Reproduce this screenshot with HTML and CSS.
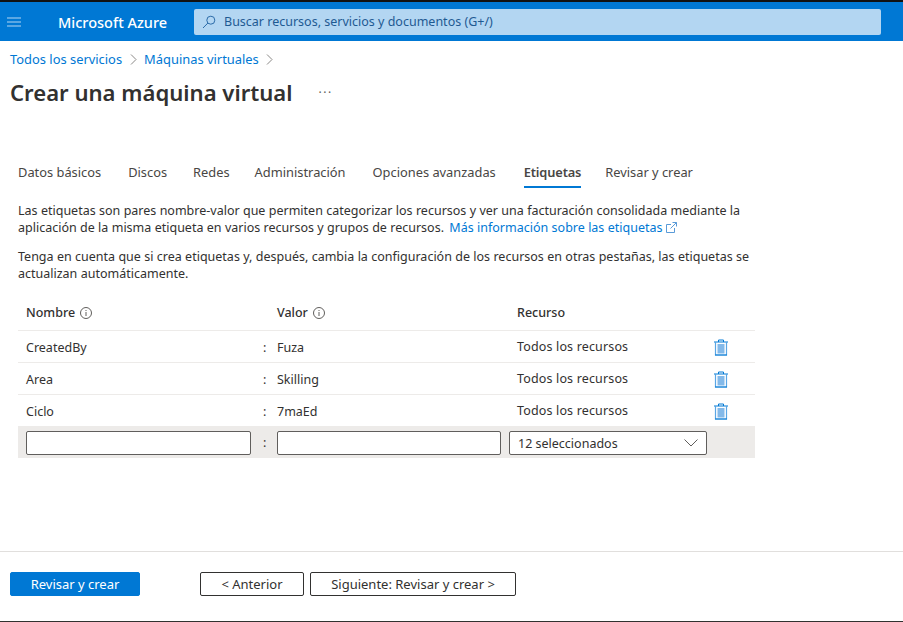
FILE: index.html
```html
<!DOCTYPE html>
<html lang="es">
  <head>
    <meta charset="utf-8" />
    <meta name="viewport" content="width=device-width, initial-scale=1.0" />
    <title>Crear una máquina virtual</title>
    <link rel="stylesheet" href="styles.css">
  </head>
  <body>
    <header class="topbar">
      <button class="menu-btn" aria-label="Menu">
        <svg width="14" height="10" viewBox="0 0 14 10"><path d="M0 1h14M0 5h14M0 9h14" stroke="#b3d6f2" stroke-width="1.2"/></svg>
      </button>
      <div class="brand">Microsoft Azure</div>
      <div class="search">
        <svg width="14" height="14" viewBox="0 0 14 14" fill="none" stroke="#2b6ba8" stroke-width="1"><circle cx="8.8" cy="5.2" r="4"/><path d="M5.9 8L1 13"/></svg>
        <span>Buscar recursos, servicios y documentos (G+/)</span>
      </div>
    </header>

    <main class="content">
      <nav class="breadcrumb">
        <a href="#">Todos los servicios</a>
        <svg class="crumb-sep" width="7" height="11" viewBox="0 0 7 11" fill="none" stroke="#8a8886"><path d="M1 .5l5 5-5 5"/></svg>
        <a href="#">Máquinas virtuales</a>
        <svg class="crumb-sep" width="7" height="11" viewBox="0 0 7 11" fill="none" stroke="#8a8886"><path d="M1 .5l5 5-5 5"/></svg>
      </nav>

      <div class="title-row">
        <h1>Crear una máquina virtual</h1>
        <span class="more">···</span>
      </div>

      <ul class="tabs">
        <li>Datos básicos</li>
        <li>Discos</li>
        <li>Redes</li>
        <li>Administración</li>
        <li>Opciones avanzadas</li>
        <li class="active">Etiquetas</li>
        <li>Revisar y crear</li>
      </ul>

      <p class="desc">Las etiquetas son pares nombre-valor que permiten categorizar los recursos y ver una facturación consolidada mediante la aplicación de la misma etiqueta en varios recursos y grupos de recursos. <a class="more-link" href="#">Más información sobre las etiquetas</a> <svg width="11" height="11" viewBox="0 0 11 11" fill="none" stroke="#5a9bd8"><path d="M8.500 6v4.500h-8v-8H5M6.500 .5h4v4M10.500 .5L4.500 6.500"/></svg></p>
      <p class="desc">Tenga en cuenta que si crea etiquetas y, después, cambia la configuración de los recursos en otras pestañas, las etiquetas se actualizan automáticamente.</p>

      <div class="tag-table">
        <div class="tag-row tag-head">
          <div>Nombre <svg class="info" width="12" height="12" viewBox="0 0 12 12" fill="none" stroke="#605e5c"><circle cx="6" cy="6" r="5.500"/><path d="M6 5v4M6 3v1"/></svg></div>
          <div></div>
          <div>Valor <svg class="info" width="12" height="12" viewBox="0 0 12 12" fill="none" stroke="#605e5c"><circle cx="6" cy="6" r="5.500"/><path d="M6 5v4M6 3v1"/></svg></div>
          <div class="res">Recurso</div>
          <div></div>
        </div>
        <div class="tag-row">
          <div>CreatedBy</div>
          <div class="colon">:</div>
          <div>Fuza</div>
          <div class="res all">Todos los recursos</div>
          <div class="trash"><svg width="14" height="17" viewBox="0 0 14 17"><rect x="3.500" y="5" width="7" height="9.500" fill="#83b9e9"/><path d="M1.500 3.500V16h11V3.500" fill="none" stroke="#5aa6e4" stroke-width="1.200"/><path d="M1 16h12M0 3h14M4.500 3V1h5v2" fill="none" stroke="#0078d4"/></svg></div>
        </div>
        <div class="tag-row">
          <div>Area</div>
          <div class="colon">:</div>
          <div>Skilling</div>
          <div class="res all">Todos los recursos</div>
          <div class="trash"><svg width="14" height="17" viewBox="0 0 14 17"><rect x="3.500" y="5" width="7" height="9.500" fill="#83b9e9"/><path d="M1.500 3.500V16h11V3.500" fill="none" stroke="#5aa6e4" stroke-width="1.200"/><path d="M1 16h12M0 3h14M4.500 3V1h5v2" fill="none" stroke="#0078d4"/></svg></div>
        </div>
        <div class="tag-row">
          <div>Ciclo</div>
          <div class="colon">:</div>
          <div>7maEd</div>
          <div class="res all">Todos los recursos</div>
          <div class="trash"><svg width="14" height="17" viewBox="0 0 14 17"><rect x="3.500" y="5" width="7" height="9.500" fill="#83b9e9"/><path d="M1.500 3.500V16h11V3.500" fill="none" stroke="#5aa6e4" stroke-width="1.200"/><path d="M1 16h12M0 3h14M4.500 3V1h5v2" fill="none" stroke="#0078d4"/></svg></div>
        </div>
        <div class="tag-row tag-new">
          <input type="text" />
          <div class="colon">:</div>
          <input type="text" />
          <div class="dropdown">
            <span>12 seleccionados</span>
            <svg width="14" height="8" viewBox="0 0 14 8" fill="none" stroke="#605e5c"><path d="M.5 .5L7 7l6.500-6.500"/></svg>
          </div>
          <div></div>
        </div>
      </div>
    </main>

    <footer class="actions">
      <button class="btn primary">Revisar y crear</button>
      <button class="btn prev">&lt; Anterior</button>
      <button class="btn next">Siguiente: Revisar y crear &gt;</button>
    </footer>
  </body>
</html>
```

FILE: styles.css
```css
/* Global */
body {
  margin: 0;
  height: 622px;
  overflow: hidden;
  display: flex;
  flex-direction: column;
  box-sizing: border-box;
  border-bottom: 1px solid #323130;
  font-family: "Noto Sans", "Open Sans", sans-serif;
  font-size: 12.5px;
  color: #323130;
  background: #fff;
}

a {
  color: #0078d4;
  text-decoration: none;
}

/* Top bar */
.topbar {
  flex: none;
  height: 39px;
  border-top: 2px solid #111;
  background: #0078d4;
  display: flex;
  align-items: center;
  color: #fff;
}

.menu-btn {
  width: 28px;
  height: 39px;
  padding: 0;
  border: none;
  background: none;
  display: flex;
  align-items: center;
  justify-content: center;
}

.brand {
  margin-left: 30px;
  width: 136px;
  font-size: 14.5px;
  font-weight: 500;
}

.search {
  width: 687px;
  height: 26px;
  border-radius: 2px;
  background: #b3d6f2;
  color: #1f5a92;
  display: flex;
  align-items: center;
  gap: 8px;
  padding-left: 8px;
  box-sizing: border-box;
}

/* Page head */
.content {
  flex: 1;
  padding: 0 18px;
}

.breadcrumb {
  margin: 9px 0 0 -8px;
  height: 18px;
  display: flex;
  align-items: center;
  gap: 7.5px;
  font-size: 12.9px;
}

.title-row {
  margin: 6px 0 0 -8px;
  height: 36px;
  display: flex;
  align-items: center;
}

h1 {
  margin: 0;
  font-size: 22.1px;
  font-weight: 600;
}

.more {
  margin-left: 26px;
  color: #605e5c;
  font-size: 12px;
  letter-spacing: 1.5px;
}

/* Tabs */
.tabs {
  list-style: none;
  margin: 53px 0 0;
  padding: 0;
  display: flex;
  height: 39px;
  font-size: 12.85px;
}

.tabs li {
  height: 23px;
  margin-right: 26px;
  color: #484644;
}

.tabs li:first-child {
  margin-right: 27px;
}

.tabs li:nth-child(3) {
  margin-right: 25px;
}

.tabs li:nth-child(4) {
  margin-right: 27px;
}

.tabs li:nth-child(5) {
  margin-right: 28px;
}

.tabs li.active {
  font-weight: 600;
  letter-spacing: -.15px;
  border-bottom: 2px solid #0078d4;
  margin-right: 24px;
}

/* Text */
.desc {
  width: 737px;
  margin: 0 0 12px;
  line-height: 17px;
  word-spacing: .1px;
}

.desc svg {
  vertical-align: -1px;
}

.more-link {
  margin-left: 2px;
}

/* Tag table */
.tag-table {
  width: 737px;
}

.tag-row {
  display: grid;
  grid-template-columns: 225px 26px 232px 198px 1fr;
  align-items: center;
  height: 29px;
  padding: 2px 0 0 8px;
  border-bottom: 1px solid #edebe9;
}

.tag-head {
  height: 36px;
  padding-top: 0;
  font-weight: 500;
}

.info {
  vertical-align: -2px;
  margin-left: 2px;
}

.colon {
  padding-left: 12px;
}

.res {
  padding-left: 8px;
}

.all {
  margin-top: -2px;
  letter-spacing: .15px;
}

.trash {
  display: flex;
  padding-left: 7px;
}

.tag-new {
  height: 31px;
  padding-top: 0;
  border-bottom: none;
  background: #edebe9;
}

.tag-new input {
  box-sizing: border-box;
  width: 100%;
  height: 24px;
  margin: 0;
  border: 1px solid #605e5c;
  border-radius: 2px;
  background: #fff;
}

.tag-new input:nth-of-type(2) {
  width: 224px;
}

.dropdown {
  box-sizing: border-box;
  height: 24px;
  border: 1px solid #605e5c;
  border-radius: 2px;
  background: #fff;
  display: flex;
  align-items: center;
  justify-content: space-between;
  padding: 1px 8px 0;
}

/* Footer */
.actions {
  flex: none;
  box-sizing: border-box;
  height: 70px;
  border-top: 1px solid #e1dfdd;
  display: flex;
  align-items: flex-start;
  padding: 20px 0 0 10px;
  font-size: 13px;
}

.btn {
  box-sizing: border-box;
  height: 24px;
  padding: 0;
  border: 1px solid #323130;
  border-radius: 2px;
  background: #fff;
  color: #323130;
  font: inherit;
}

.primary {
  width: 130px;
  margin-right: 60px;
  border-color: #0078d4;
  background: #0078d4;
  color: #fff;
}

.prev {
  width: 104px;
  margin-right: 6px;
}

.next {
  width: 206px;
}
```
